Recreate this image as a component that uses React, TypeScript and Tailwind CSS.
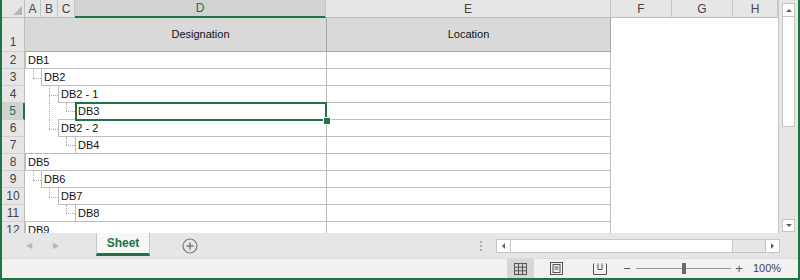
import React from "react";

type Conn = { c: number; t: "L" | "T" | "I" };
type Row = { n: number; text: string; col: number; conns: Conn[] };

const ROWS: Row[] = [
  { n: 2, text: "DB1", col: 0, conns: [] },
  { n: 3, text: "DB2", col: 1, conns: [{ c: 0, t: "L" }] },
  { n: 4, text: "DB2 - 1", col: 2, conns: [{ c: 1, t: "T" }] },
  { n: 5, text: "DB3", col: 3, conns: [{ c: 1, t: "I" }, { c: 2, t: "L" }] },
  { n: 6, text: "DB2 - 2", col: 2, conns: [{ c: 1, t: "L" }] },
  { n: 7, text: "DB4", col: 3, conns: [{ c: 2, t: "L" }] },
  { n: 8, text: "DB5", col: 0, conns: [] },
  { n: 9, text: "DB6", col: 1, conns: [{ c: 0, t: "L" }] },
  { n: 10, text: "DB7", col: 2, conns: [{ c: 1, t: "L" }] },
  { n: 11, text: "DB8", col: 3, conns: [{ c: 2, t: "L" }] },
  { n: 12, text: "DB9", col: 0, conns: [] },
];

const COL_W = ["w-[16px]", "w-[17px]", "w-[17px]"];
const MERGED_W = ["w-[301px]", "w-[285px]", "w-[268px]", "w-[251px]"];

function RowHead({ n, active, tall }: { n: number; active?: boolean; tall?: boolean }) {
  return (
    <div
      className={`w-[23px] shrink-0 flex justify-center border-b border-[#cfcfcf] text-[12px] leading-none ${
        tall ? "items-end pb-[3px]" : "items-center"
      } ${
        active
          ? "bg-[#d2d2d2] text-[#217346] border-r-2 border-r-[#217346]"
          : "bg-[#e6e6e6] text-[#444] border-r border-r-[#bdbdbd]"
      }`}
    >
      {n}
    </div>
  );
}

function Connector({ t }: { t: "L" | "T" | "I" }) {
  return (
    <>
      <div
        className={`absolute left-[8px] top-0 border-l border-dotted border-[#a8a8a8] ${
          t === "L" ? "h-1/2" : "h-full"
        }`}
      />
      {t !== "I" && (
        <div className="absolute left-[8px] right-0 top-1/2 border-t border-dotted border-[#a8a8a8]" />
      )}
    </>
  );
}

function DataRow({ r, next }: { r: Row; next?: Row }) {
  const lo = next ? Math.min(r.col, next.col) : r.col;
  const selected = r.n === 5;
  return (
    <div className="flex h-[17px] shrink-0">
      <RowHead n={r.n} active={selected} />
      {[0, 1, 2].slice(0, r.col).map((c) => {
        const conn = r.conns.find((k) => k.c === c);
        return (
          <div
            key={c}
            className={`relative shrink-0 ${COL_W[c]} ${
              c >= lo ? "border-b border-[#bdbdbd]" : ""
            }`}
          >
            {conn && <Connector t={conn.t} />}
          </div>
        );
      })}
      <div
        className={`relative shrink-0 ${MERGED_W[r.col]} border-l border-b border-[#bdbdbd] pl-[2px] flex items-center text-[11px] text-[#111]`}
      >
        {r.text}
        {selected && (
          <div className="absolute left-[-1px] top-[-1px] right-[-1px] bottom-[-2px] border-2 border-[#217346] z-10">
            <div className="absolute right-[-5px] bottom-[-5px] w-[6px] h-[6px] bg-[#217346] outline outline-1 outline-white" />
          </div>
        )}
      </div>
      <div className="shrink-0 w-[285px] border-l border-r border-b border-[#bdbdbd]" />
      <div className="flex-1" />
    </div>
  );
}

function ColHead({ w, label, active }: { w: string; label: string; active?: boolean }) {
  return (
    <div
      className={`${w} shrink-0 flex items-center justify-center border-r border-[#c6c6c6] text-[12px] ${
        active
          ? "bg-[#d2d2d2] text-[#217346] border-b-2 border-b-[#217346]"
          : "bg-[#e6e6e6] text-[#444] border-b border-b-[#bdbdbd]"
      }`}
    >
      {label}
    </div>
  );
}

function Grid() {
  return (
    <div className="w-[777px] h-[233px] overflow-hidden bg-white border-r border-[#c6c6c6] flex flex-col">
      {/* column headers */}
      <div className="flex h-[18px] shrink-0">
        <div className="relative w-[23px] shrink-0 bg-[#e6e6e6] border-r border-b border-[#bdbdbd]">
          <div className="absolute right-[2px] bottom-[2px] w-0 h-0 border-l-[9px] border-l-transparent border-b-[9px] border-b-[#b5b5b5]" />
        </div>
        <ColHead w="w-[16px]" label="A" />
        <ColHead w="w-[17px]" label="B" />
        <ColHead w="w-[17px]" label="C" />
        <ColHead w="w-[251px]" label="D" active />
        <ColHead w="w-[285px]" label="E" />
        <ColHead w="w-[61px]" label="F" />
        <ColHead w="w-[61px]" label="G" />
        <ColHead w="w-[45px]" label="H" />
      </div>
      {/* row 1 */}
      <div className="flex h-[34px] shrink-0">
        <RowHead n={1} tall />
        <div className="w-[50px] shrink-0 bg-[#d9d9d9] border-b border-[#a6a6a6]" />
        <div className="w-[251px] shrink-0 bg-[#d9d9d9] border-b border-[#a6a6a6] flex items-center justify-center text-[11px] text-[#111]">
          Designation
        </div>
        <div className="w-[285px] shrink-0 bg-[#d9d9d9] border-l border-r border-b border-[#a6a6a6] flex items-center justify-center text-[11px] text-[#111]">
          Location
        </div>
        <div className="flex-1" />
      </div>
      {ROWS.map((r, i) => (
        <DataRow key={r.n} r={r} next={ROWS[i + 1]} />
      ))}
    </div>
  );
}

function VScroll() {
  return (
    <div className="w-[18px] h-[233px] bg-[#e6e6e6] flex flex-col items-center pt-[3px] pl-[1px]">
      <div className="w-[13px] h-[14px] bg-white border border-[#c6c6c6] flex items-center justify-center">
        <div className="w-0 h-0 border-x-[3px] border-x-transparent border-b-[3px] border-b-[#606060]" />
      </div>
      <div className="w-[13px] h-[110px] bg-white border border-[#c6c6c6] border-t-0" />
      <div className="flex-1" />
      <div className="w-[13px] h-[13px] bg-white border border-[#c6c6c6] flex items-center justify-center mb-[1px]">
        <div className="w-0 h-0 border-x-[3px] border-x-transparent border-t-[3px] border-t-[#606060]" />
      </div>
    </div>
  );
}

function TabBar() {
  return (
    <div className="h-[25px] bg-[#e6e6e6] flex items-stretch">
      <div className="w-[94px] flex items-center text-[8px] text-[#b8b8b8]">
        <span className="ml-[24px]">◀</span>
        <span className="ml-[21px]">▶</span>
      </div>
      <div className="w-[54px] h-[23px] bg-[#f7f7f7] border-x border-[#c6c6c6] border-b-[3px] border-b-[#217346] flex items-center justify-center text-[12px] font-bold text-[#217346]">
        Sheet
      </div>
      <div className="w-[80px] flex items-center justify-center">
        <svg width="16" height="16" viewBox="0 0 16 16">
          <circle cx="8" cy="8" r="7" fill="none" stroke="#7a7a7a" strokeWidth="1.2" />
          <path d="M8 4.5v7M4.5 8h7" stroke="#7a7a7a" strokeWidth="1.4" />
        </svg>
      </div>
      <div className="flex-1" />
      <div className="w-[30px] flex flex-col items-center justify-center gap-[2px]">
        <div className="w-[2px] h-[2px] bg-[#b0b0b0]" />
        <div className="w-[2px] h-[2px] bg-[#b0b0b0]" />
        <div className="w-[2px] h-[2px] bg-[#b0b0b0]" />
      </div>
      <div className="w-[302px] flex items-center pr-[18px]">
        <div className="flex h-[14px] w-full border border-[#c6c6c6] bg-[#e6e6e6]">
          <div className="w-[14px] bg-white border-r border-[#c6c6c6] flex items-center justify-center">
            <div className="w-0 h-0 border-y-[3px] border-y-transparent border-r-[3px] border-r-[#606060]" />
          </div>
          <div className="w-[222px] bg-white border-r border-[#c6c6c6]" />
          <div className="flex-1" />
          <div className="w-[14px] bg-white border-l border-[#c6c6c6] flex items-center justify-center">
            <div className="w-0 h-0 border-y-[3px] border-y-transparent border-l-[3px] border-l-[#606060]" />
          </div>
        </div>
      </div>
    </div>
  );
}

function StatusBar() {
  return (
    <div className="h-[20px] bg-[#f2f1f1] border-t border-[#dadada] flex items-stretch text-[#555] pr-[10px]">
      <div className="flex-1" />
      <div className="w-[27px] bg-[#d6d6d6] flex items-center justify-center">
        <svg width="13" height="12" viewBox="0 0 13 12">
          <rect x="0.5" y="0.5" width="12" height="11" fill="none" stroke="#555" />
          <path d="M4.5 0.5v11M8.5 0.5v11M0.5 4.2h12M0.5 7.8h12" stroke="#555" />
        </svg>
      </div>
      <div className="w-[44px] flex items-center justify-center">
        <svg width="13" height="13" viewBox="0 0 13 13">
          <rect x="0.5" y="0.5" width="12" height="12" fill="none" stroke="#555" />
          <rect x="3" y="2.5" width="7" height="8" fill="none" stroke="#555" />
          <path d="M4.5 5h4M4.5 7h4" stroke="#555" />
        </svg>
      </div>
      <div className="w-[44px] flex items-center justify-center">
        <svg width="14" height="12" viewBox="0 0 14 12">
          <path d="M0.5 0.5v11h13v-11M5 0.5v6h4v-6" fill="none" stroke="#555" />
        </svg>
      </div>
      <div className="w-[124px] flex items-center text-[13px]">
        <span className="w-[10px] text-center leading-none">−</span>
        <div className="relative w-[95px] ml-[4px] h-px bg-[#9a9a9a]">
          <div className="absolute left-[46px] top-[-5px] w-[4px] h-[11px] bg-[#6a6a6a]" />
        </div>
        <span className="w-[10px] ml-[3px] text-center leading-none">+</span>
      </div>
      <div className="w-[42px] flex items-center justify-center text-[11px] text-[#444]">100%</div>
    </div>
  );
}

export default function App() {
  return (
    <div
      className="w-[800px] h-[280px] overflow-hidden border-x-2 border-b-2 border-[#217346] bg-[#e6e6e6] flex flex-col"
      style={{ fontFamily: '"Liberation Sans", Arial, sans-serif' }}
    >
      <div className="flex h-[233px] shrink-0">
        <Grid />
        <VScroll />
      </div>
      <TabBar />
      <StatusBar />
    </div>
  );
}
